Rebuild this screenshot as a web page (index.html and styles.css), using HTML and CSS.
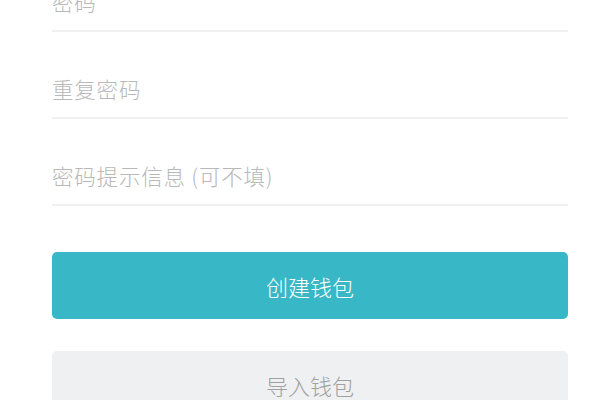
FILE: index.html
```html
<!DOCTYPE html>
<html lang="zh-CN">
<head>
<meta charset="utf-8">
<link rel="stylesheet" href="styles.css">
</head>
<body>
<div class="page">
  <div class="form">
    <div class="field"><span class="ph">密码</span></div>
    <div class="field"><span class="ph">重复密码</span></div>
    <div class="field"><span class="ph">密码提示信息 (可不填)</span></div>
  </div>
  <div class="btn primary">创建钱包</div>
  <div class="btn secondary">导入钱包</div>
</div>
</body>
</html>
```
FILE: styles.css
```css
html, body {
  margin: 0;
  padding: 0;
  background: #ffffff;
  overflow: hidden;
}
body {
  font-family: "Noto Sans CJK SC", "Noto Sans", sans-serif;
}
.page {
  width: 516px;
  padding: 0 32px 0 52px;
  display: flex;
  flex-direction: column;
}
.form {
  margin-top: -55px;
  display: flex;
  flex-direction: column;
}
.field {
  height: 87px;
  box-sizing: border-box;
  border-bottom: 2px solid #f0f0f0;
  display: flex;
  align-items: flex-end;
}
.ph {
  color: #b8b8b8;
  font-size: 21.5px;
  line-height: 24px;
  margin-bottom: 16px;
  font-weight: 300;
  letter-spacing: 0.8px;
}
.btn {
  height: 67px;
  border-radius: 5px;
  display: flex;
  align-items: center;
  justify-content: center;
  font-size: 22px;
  font-weight: 300;
}
.primary {
  margin-top: 46px;
  background: #38b7c7;
  color: #ffffff;
}
.secondary {
  margin-top: 32px;
  background: #eff0f2;
  color: #a0a0a0;
}
```
